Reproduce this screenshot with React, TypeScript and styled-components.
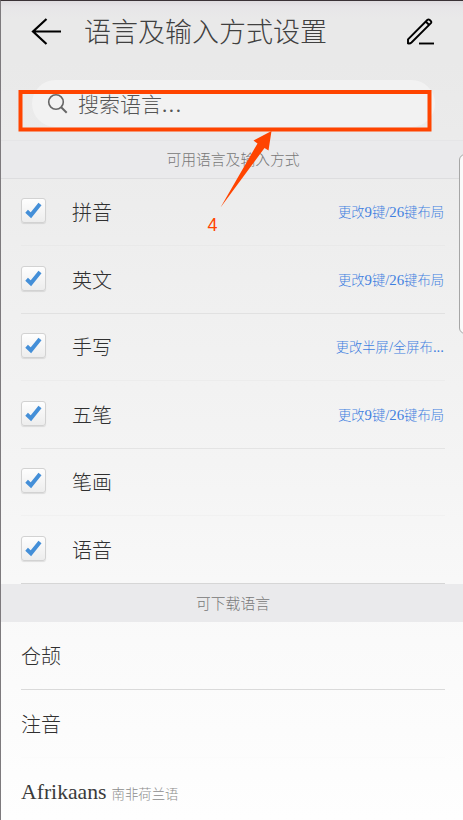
import React from "react";
import styled, { createGlobalStyle } from "styled-components";

const Global = createGlobalStyle`
  * { box-sizing: border-box; }
  html, body { margin: 0; padding: 0; overflow: hidden; }
`;

const Screen = styled.main`
  position: relative;
  width: 463px;
  height: 820px;
  overflow: hidden;
  display: flex;
  flex-direction: column;
  border-left: 1px solid #7d7a7d;
  border-top: 1px solid #3a3236;
  background: linear-gradient(#dedcdf 0, #e7e6e8 6px, #e9e9e9 18px, #e9e9e9 60px, #eeeeee 240px, #f4f4f4 460px, #fafafa 640px, #fefefe 819px);
  color: #3a3a3a;
  font-family: "Liberation Serif", "Noto Sans CJK SC", serif;
  font-weight: 300;
`;

const Header = styled.header`
  flex: none;
  height: 79px;
  padding: 0 29px 17px 30px;
  display: flex;
  align-items: center;
`;

const Title = styled.h1`
  flex: 1;
  margin: 2px 0 0 22px;
  font-size: 27px;
  line-height: 40px;
  font-weight: 300;
  color: #404040;
  white-space: nowrap;
`;

const IconButton = styled.button`
  flex: none;
  display: flex;
  padding: 0;
  border: 0;
  background: none;
`;

const SearchArea = styled.div`
  flex: none;
  height: 60px;
  padding: 0 28px 0 31px;
`;

const SearchField = styled.div`
  height: 47px;
  padding: 0 15px 0 15px;
  display: flex;
  align-items: center;
  border-radius: 24px;
  background: #f2f2f2;
  font-size: 21px;
  line-height: 30px;
  color: #555;
  white-space: nowrap;

  svg { flex: none; margin-right: 9px; }
`;

const Query = styled.span`
  padding-top: 2px;
`;

const Dots = styled.span`
  letter-spacing: 1.6px;
`;

const SectionTitle = styled.h2<{ $size: "first" | "second" }>`
  flex: none;
  height: ${(p) => (p.$size === "first" ? 39 : 38)}px;
  margin: 0;
  border-top: ${(p) => (p.$size === "first" ? "1px solid #e5e5e7" : "0")};
  border-bottom: ${(p) => (p.$size === "first" ? "1px solid #dddddf" : "0")};
  display: flex;
  align-items: center;
  justify-content: center;
  padding: 0 0 2px 2px;
  background: #eaeaec;
  font-size: 14.8px;
  font-weight: 300;
  color: #777;
`;

const List = styled.ul`
  flex: none;
  margin: 0;
  padding: 0 18px 0 20px;
  list-style: none;
`;

const Row = styled.li<{ $line: string; $tall?: boolean }>`
  height: ${(p) => (p.$tall ? 68 : 67)}px;
  display: flex;
  align-items: center;
  border-bottom: 1px solid ${(p) => p.$line};
  white-space: nowrap;
`;

const CheckBox = styled.span`
  flex: none;
  width: 25px;
  height: 25px;
  margin: 0 26px 3px 0;
  display: flex;
  align-items: center;
  justify-content: center;
  border: 1px solid #d2d2d2;
  border-radius: 3px;
  background: linear-gradient(#fefefe, #ededed);
  box-shadow: 0 1px 1px rgba(0, 0, 0, 0.1);
`;

const Label = styled.span`
  flex: 1;
  padding-top: 2px;
  font-size: 20px;
  line-height: 30px;
  color: #303030;
`;

const Link = styled.a`
  padding: 2px 1px 0 0;
  font-size: 13.3px;
  line-height: 20px;
  color: #3f7fe0;
`;

const Digits = styled.span`
  font-size: 14.8px;
  line-height: 1;
`;

const Latin = styled.span`
  font-size: 21.7px;
  padding-top: 2px;
`;

const Note = styled.small`
  margin-left: 5px;
  padding-top: 4px;
  font-size: 13.4px;
  color: #8c8c8c;
`;

const Annotation = styled.svg`
  position: absolute;
  left: -1px;
  top: -1px;
  pointer-events: none;
`;

const Handle = styled.div`
  position: absolute;
  top: 153px;
  right: -8px;
  width: 12px;
  height: 180px;
  border: 1px solid #a6a6a6;
  border-radius: 7px;
  background: #fafafa;
`;

const languages = [
  { name: "拼音", link: "更改9键/26键布局" },
  { name: "英文", link: "更改9键/26键布局" },
  { name: "手写", link: "更改半屏/全屏布..." },
  { name: "五笔", link: "更改9键/26键布局" },
  { name: "笔画" },
  { name: "语音" },
];
const lines = ["#e9e9e9", "#e1e1e1", "#ececec", "#e4e4e4", "#f1f1f1", "#d6d6d6"];

function LayoutLink({ text }: { text: string }) {
  return (
    <Link>
      {text.split(/([\d/.]+)/).map((part, i) => (i % 2 ? <Digits key={i}>{part}</Digits> : part))}
    </Link>
  );
}

export default function App() {
  return (
    <>
      <Global />
      <Screen>
        <Header>
          <IconButton aria-label="返回">
            <svg width="31" height="28" viewBox="0 0 31 28" fill="none" stroke="#000" strokeWidth="2.200">
              <path d="M15.500 1 2 13.500l13.500 12.500M2 13.500h28" />
            </svg>
          </IconButton>
          <Title>语言及输入方式设置</Title>
          <IconButton aria-label="编辑">
            <svg width="28" height="28" viewBox="0 0 28 28" fill="none" stroke="#000" strokeWidth="1.900">
              <path d="M2 25.300v-3.900L21.500 1.800q1-.800 2 0l1.400 1.400q.800 1 0 2L5.500 24.500q-1.500 1.300-3.500.800ZM20.200 4l3 3" />
              <path d="M13 25.500h15" />
            </svg>
          </IconButton>
        </Header>
        <SearchArea>
          <SearchField>
            <svg width="22" height="22" viewBox="0 0 22 22" fill="none" stroke="#666" strokeWidth="1.600">
              <circle cx="9" cy="9" r="7.300" />
              <path d="m14.200 14.200 5.500 5.500" strokeWidth="2" />
            </svg>
            <Query>搜索语言<Dots>...</Dots></Query>
          </SearchField>
        </SearchArea>
        <SectionTitle $size="first">可用语言及输入方式</SectionTitle>
        <List>
          {languages.map((item, i) => (
            <Row key={item.name} $line={lines[i]} $tall={i % 2 === 1}>
              <CheckBox role="checkbox" aria-checked="true">
                <svg width="17" height="17" viewBox="0 0 17 17" fill="none" stroke="#448fd8" strokeWidth="3.900">
                  <path d="m1.600 9.300 4.300 4L15 2" />
                </svg>
              </CheckBox>
              <Label>{item.name}</Label>
              {item.link && <LayoutLink text={item.link} />}
            </Row>
          ))}
        </List>
        <SectionTitle $size="second">可下载语言</SectionTitle>
        <List>
          <Row $line="#dadada" $tall><Label>仓颉</Label></Row>
          <Row $line="#fbfbfb" $tall><Label>注音</Label></Row>
          <Row $line="transparent"><Latin>Afrikaans</Latin><Note>南非荷兰语</Note></Row>
        </List>
        <Handle />
        <Annotation width="463" height="240" viewBox="0 0 463 240">
          <rect x="20.500" y="92" width="409" height="37.500" fill="none" stroke="#ff4400" strokeWidth="4" />
          <path d="M271.500 131 253.500 140.500 257.500 143.500 220.500 207.500 264.500 148 268.500 150.500Z" fill="#ff4400" />
          <text x="207.500" y="231" fill="#ff4400" fontFamily="Liberation Sans, sans-serif" fontSize="18" fontWeight="400">4</text>
        </Annotation>
      </Screen>
    </>
  );
}
